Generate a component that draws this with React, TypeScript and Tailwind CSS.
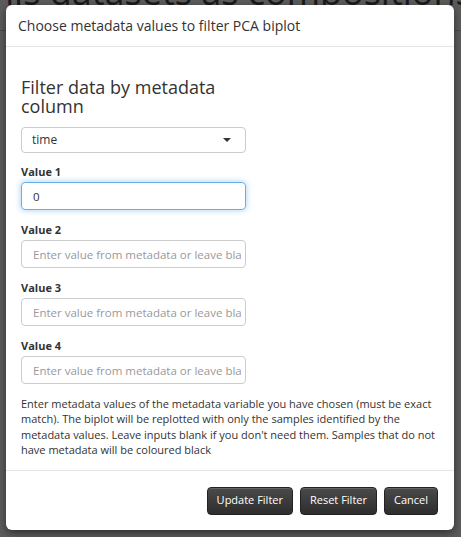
import React from 'react';

const font = { fontFamily: '"Open Sans", "Liberation Sans", sans-serif' };

const ValueInput = ({ label, value, focused }: { label: string; value?: string; focused?: boolean }) => (
  <div className="mb-[12px]">
    <label className="block text-[11px] font-bold text-[#333] leading-[15px] mb-[3px]">{label}</label>
    <input
      readOnly
      value={value ?? ''}
      placeholder="Enter value from metadata or leave blank"
      className={
        'block w-[225px] h-[28px] pl-[11px] pr-[4px] text-[11.5px] text-[#333] rounded-[4px] outline-none placeholder:text-[#999] ' +
        (focused
          ? 'border border-[#66afe9] shadow-[0_0_6px_rgba(102,175,233,0.6)]'
          : 'border border-[#ccc]')
      }
    />
  </div>
);

export default function App() {
  return (
    <div className="relative w-[461px] h-[537px] overflow-hidden bg-[#5c5c5c]" style={font}>
      {/* page behind the modal */}
      <div className="absolute inset-0">
        <div className="text-[36px] leading-[36px] -mt-[26px] ml-[-8px] text-[#1a1a1a] whitespace-nowrap">
          nis datasets as compositions
        </div>
        <div className="mt-[20px] h-px bg-[#4a4a4a]" />
      </div>

      {/* modal */}
      <div className="absolute left-[6px] top-[5px] w-[448px] h-[525px] bg-white rounded-[6px] shadow-[0_3px_9px_rgba(0,0,0,0.5)] flex flex-col">
        <div className="h-[42px] px-[12px] flex items-center border-b border-[#e5e5e5]">
          <h4 className="text-[14px] text-[#333]">Choose metadata values to filter PCA biplot</h4>
        </div>

        <div className="flex-1 px-[15px] pt-[31px]">
          <h3 className="text-[18px] leading-[19px] text-[#333] w-[240px] mb-[11px]">Filter data by metadata column</h3>

          <div className="w-[225px] h-[26px] border border-[#ccc] rounded-[4px] flex items-center justify-between pl-[10px] pr-[14px] mb-[11px]">
            <span className="text-[12px] text-[#333]">time</span>
            <svg width="8" height="4" viewBox="0 0 8 4">
              <path d="M0 0h8L4 4z" fill="#333" />
            </svg>
          </div>

          <ValueInput label="Value 1" value="0" focused />
          <ValueInput label="Value 2" />
          <ValueInput label="Value 3" />
          <ValueInput label="Value 4" />

          <p className="mt-[2px] text-[11px] leading-[15.3px] text-[#333]">
            Enter metadata values of the metadata variable you have chosen (must be exact match). The biplot will be
            replotted with only the samples identified by the metadata values. Leave inputs blank if you don't need
            them. Samples that do not have metadata will be coloured black
          </p>
        </div>

        <div className="h-[60px] border-t border-[#e5e5e5] flex items-center justify-end gap-[7px] px-[16px]">
          {['Update Filter', 'Reset Filter', 'Cancel'].map((b) => (
            <button
              key={b}
              className="h-[28px] px-[9px] rounded-[4px] text-[11px] text-white bg-gradient-to-b from-[#4a4a4a] to-[#2e2e2e] border border-[#222] shadow-[inset_0_1px_0_rgba(255,255,255,0.15)]"
            >
              {b}
            </button>
          ))}
        </div>
      </div>
    </div>
  );
}
